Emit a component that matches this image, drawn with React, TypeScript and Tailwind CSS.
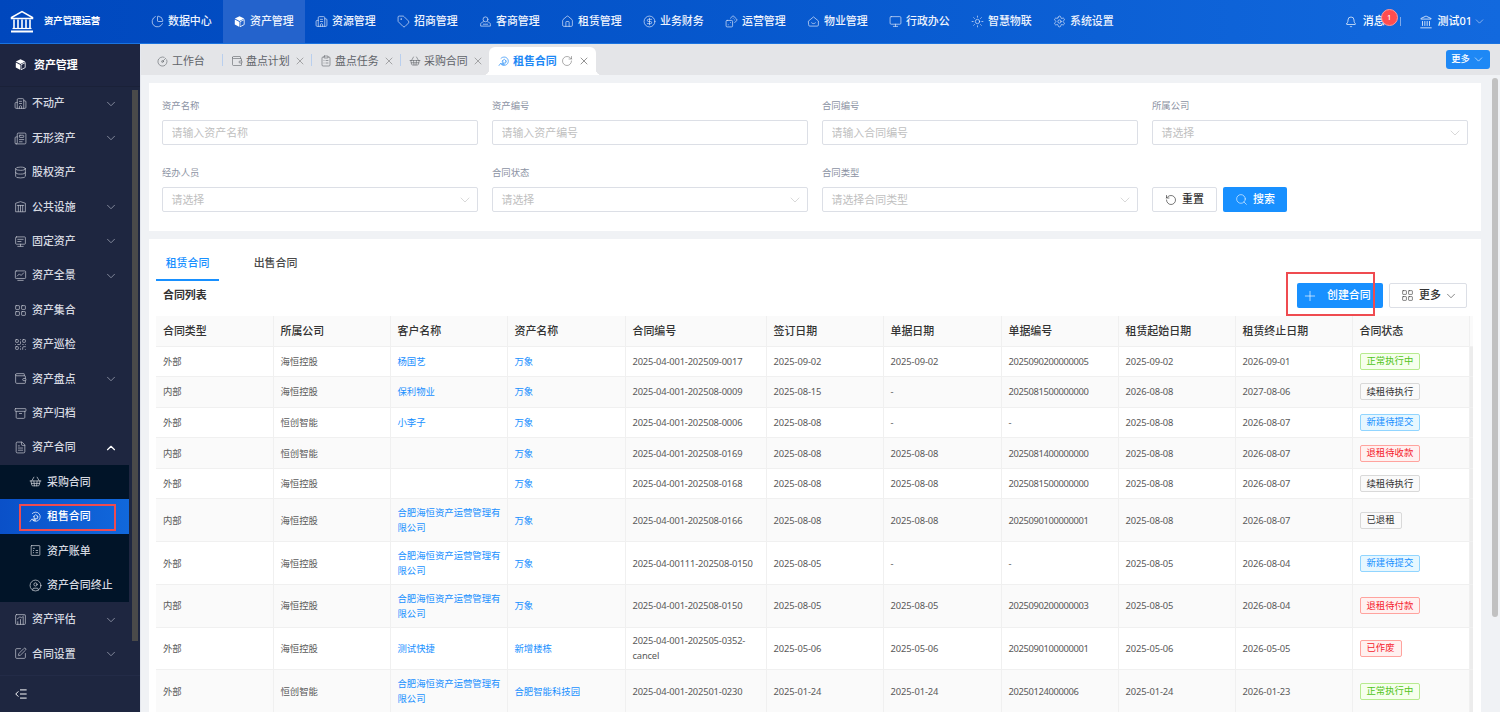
import React from "react";
import {
  Bell, Building2, ChevronDown, ChevronUp, ChartPie, CircleDollarSign, CircleGauge,
  ClipboardList, Database, FileText, House, IndentDecrease, Landmark,
  LayoutGrid, Monitor, Newspaper, Plus, QrCode, RotateCcw, RotateCw, Search, Settings, ShoppingBasket,
  Sun, Tag, Wallet, X, CircleUser, Archive, SquarePen, Dices,
} from "lucide-react";

type IconProps = { size?: number; strokeWidth?: number; className?: string };

const Cube = ({ className = "" }: { className?: string }) => (
  <svg viewBox="0 0 16 16" className={className}>
    <path d="M8 1.5 13.8 4.4 8 7.3 2.2 4.4Z" fill="#fff" />
    <path d="M2.2 5.6 7.4 8.3V14.5L2.2 11.8Z" fill="#fff" />
    <path d="M13.8 5.6 8.6 8.3V14.5L13.8 11.8Z" fill="none" stroke="#fff" strokeWidth="1" />
  </svg>
);

const Logo = () => (
  <svg viewBox="0 0 24 23" className="w-[24px] h-[23px]" fill="none" stroke="#fff">
    <path d="M1.5 7.5 12 1.5 22.5 7.5V8.5H1.5Z" strokeWidth="1.5" />
    <path d="M4 9.5V18M8 9.5V18M12 9.5V18M16 9.5V18M20 9.5V18" strokeWidth="1.6" />
    <path d="M2.5 18.5H21.5" strokeWidth="1.2" />
    <path d="M1 21.5H23" strokeWidth="2" />
  </svg>
);

const Svg = ({ size = 13, strokeWidth = 1.4, className = "", children }: IconProps & { children: React.ReactNode }) => (
  <svg viewBox="0 0 24 24" width={size} height={size} fill="none" stroke="currentColor" strokeWidth={strokeWidth} strokeLinecap="round" strokeLinejoin="round" className={className}>
    {children}
  </svg>
);

const UserBase = (p: IconProps) => (
  <Svg {...p}>
    <circle cx="12" cy="8" r="4.5" />
    <path d="M8 12.5C5 13.5 3 15 3 17v3.5h18V17c0-2-2-3.5-5-4.5" />
    <path d="M8 17h8" />
  </Svg>
);
const HouseSmile = (p: IconProps) => (
  <Svg {...p}>
    <path d="M3 11 12 3.5 21 11v7.5a2 2 0 0 1-2 2H5a2 2 0 0 1-2-2Z" />
    <path d="M8.5 14.5c1.8 2 5.2 2 7 0" />
  </Svg>
);
const ColumnsBox = (p: IconProps) => (
  <Svg {...p}>
    <path d="M3 21V6l9-3 9 3v15Z" />
    <path d="M8 10v11M12 10v11M16 10v11M6 10h12" />
  </Svg>
);
const MonitorChart = (p: IconProps) => (
  <Svg {...p}>
    <rect x="2.5" y="3.5" width="19" height="14" rx="1.5" />
    <path d="m6 13 4-4 3 3 5-5M7 21h10" />
  </Svg>
);
const BoardLines = (p: IconProps) => (
  <Svg {...p}>
    <rect x="3" y="3.5" width="18" height="13.5" rx="1.5" />
    <path d="M7 8h10M7 12h6M12 17v3.5M7 21h10" />
  </Svg>
);
const ChartBox = (p: IconProps) => (
  <Svg {...p}>
    <rect x="3" y="3" width="18" height="18" rx="1.5" />
    <path d="M7 21v-5M12 21v-9M17 21V8M6 11l5-4 3 2 4-4" />
  </Svg>
);
const DotsBox = (p: IconProps) => (
  <Svg {...p}>
    <rect x="4" y="3" width="16" height="18" rx="1" />
    <path d="M8 8h2M8 12h.5M8 16h.5M13 12h3M13 16h3" />
  </Svg>
);
const HouseRing = (p: IconProps) => (
  <Svg {...p}>
    <path d="M6 6.5A8.5 8.5 0 1 1 5 17" />
    <path d="M8 12.5 12.5 8.5 17 12.5M9.5 11.5V16h6v-4.5" />
    <path d="M2 21c1.5-3 3-4 5-4l5 .5c1 .5 1 1.5 0 2H8" />
  </Svg>
);

const navItems: [string, any][] = [
  ["数据中心", ChartPie], ["资产管理", null], ["资源管理", Building2], ["招商管理", Tag], ["客商管理", UserBase], ["租赁管理", House],
  ["业务财务", CircleDollarSign], ["运营管理", Dices], ["物业管理", HouseSmile], ["行政办公", Monitor], ["智慧物联", Sun], ["系统设置", Settings],
];

const sideItems: [string, any, boolean][] = [
  ["不动产", Building2, true], ["无形资产", Newspaper, true], ["股权资产", Database, false], ["公共设施", ColumnsBox, true], ["固定资产", BoardLines, true],
  ["资产全景", MonitorChart, true], ["资产集合", LayoutGrid, false], ["资产巡检", QrCode, false], ["资产盘点", Wallet, true], ["资产归档", Archive, false],
];

const subItems: [string, any][] = [["采购合同", ShoppingBasket], ["租售合同", HouseRing], ["资产账单", DotsBox], ["资产合同终止", CircleUser]];

const tabs: [string, any, boolean][] = [["盘点计划", Wallet, true], ["盘点任务", ClipboardList, true], ["采购合同", ShoppingBasket, false]];

type Tone = "green" | "gray" | "blue" | "red";
const toneClass: Record<Tone, string> = {
  green: "bg-[#f6ffed] border-[#b7eb8f] text-[#52c41a]",
  gray: "bg-[#fafafa] border-[#d9d9d9] text-[#333333]",
  blue: "bg-[#e6f7ff] border-[#91d5ff] text-[#1890ff]",
  red: "bg-[#fff1f0] border-[#ffa39e] text-[#f5222d]",
};

const HF = "合肥海恒资产运营管理有限公司";
const rows: { c: string[]; tag: [string, Tone]; tall?: boolean }[] = [
  { c: ["外部", "海恒控股", "杨国艺", "万象", "2025-04-001-202509-0017", "2025-09-02", "2025-09-02", "2025090200000005", "2025-09-02", "2026-09-01"], tag: ["正常执行中", "green"] },
  { c: ["内部", "海恒控股", "保利物业", "万象", "2025-04-001-202508-0009", "2025-08-15", "-", "2025081500000000", "2026-08-08", "2027-08-06"], tag: ["续租待执行", "gray"] },
  { c: ["外部", "恒创智能", "小李子", "万象", "2025-04-001-202508-0006", "2025-08-08", "-", "-", "2025-08-08", "2026-08-07"], tag: ["新建待提交", "blue"] },
  { c: ["内部", "恒创智能", "", "万象", "2025-04-001-202508-0169", "2025-08-08", "2025-08-08", "2025081400000000", "2025-08-08", "2026-08-07"], tag: ["退租待收款", "red"] },
  { c: ["外部", "海恒控股", "", "万象", "2025-04-001-202508-0168", "2025-08-08", "2025-08-08", "2025081500000000", "2025-08-08", "2026-08-07"], tag: ["续租待执行", "gray"] },
  { c: ["内部", "海恒控股", HF, "万象", "2025-04-001-202508-0166", "2025-08-08", "2025-08-08", "2025090100000001", "2025-08-08", "2026-08-07"], tag: ["已退租", "gray"], tall: true },
  { c: ["外部", "海恒控股", HF, "万象", "2025-04-00111-202508-0150", "2025-08-05", "-", "-", "2025-08-05", "2026-08-04"], tag: ["新建待提交", "blue"], tall: true },
  { c: ["内部", "海恒控股", HF, "万象", "2025-04-001-202508-0150", "2025-08-05", "2025-08-05", "2025090200000003", "2025-08-05", "2026-08-04"], tag: ["退租待付款", "red"], tall: true },
  { c: ["外部", "海恒控股", "测试快捷", "新增楼栋", "2025-04-001-202505-0352-cancel", "2025-05-06", "2025-05-06", "2025090100000001", "2025-05-06", "2026-05-05"], tag: ["已作废", "red"], tall: true },
  { c: ["外部", "恒创智能", HF, "合肥智能科技园", "2025-04-001-202501-0230", "2025-01-24", "2025-01-24", "20250124000006", "2025-01-24", "2026-01-23"], tag: ["正常执行中", "green"], tall: true },
];

const heads = ["合同类型", "所属公司", "客户名称", "资产名称", "合同编号", "签订日期", "单据日期", "单据编号", "租赁起始日期", "租赁终止日期", "合同状态"];

const numTrack = (v: string) => {
  if (/^\d+$/.test(v)) return "tracking-[-0.36px]";
  if (/^\d{4}-\d{2}-\d{2}$/.test(v)) return "tracking-[-0.1px]";
  if (/^\d{4}-/.test(v)) return "tracking-[-0.17px]";
  return "";
};

const Field = ({ label, children }: { label: string; children: React.ReactNode }) => (
  <div className="flex flex-col">
    <div className="h-[13px] leading-[14px] mb-[8px] text-[9.375px] text-[#8c93a3]">{label}</div>
    {children}
  </div>
);

const TextInput = ({ placeholder }: { placeholder: string }) => (
  <input
    readOnly
    placeholder={placeholder}
    className="h-[25px] w-full border border-[#dcdfe6] rounded-[2px] px-[8.5px] text-[10.94px] outline-none placeholder:text-[#bfbfbf] bg-white"
  />
);

const SelectBox = ({ placeholder }: { placeholder: string }) => (
  <div className="h-[25px] w-full border border-[#dcdfe6] rounded-[2px] pl-[8.5px] pr-[4px] text-[10.94px] text-[#bfbfbf] bg-white flex items-center justify-between">
    <span className="pt-px">{placeholder}</span>
    <ChevronDown size={16} strokeWidth={0.9} className="text-[#bfbfbf]" />
  </div>
);

const SideRow = ({ label, Icon, chev }: { label: string; Icon: any; chev?: "down" | "up" }) => (
  <div className="h-[34.4px] shrink-0 flex items-center pl-[14px] pr-[11px] gap-[5px] text-[10.94px] font-medium">
    <Icon size={13} strokeWidth={1.3} className="shrink-0 text-[#c4c8d2]" />
    <span>{label}</span>
    {chev === "down" && <ChevronDown size={14} strokeWidth={1.5} className="ml-auto text-[#8f95a6]" />}
    {chev === "up" && <ChevronUp size={14} strokeWidth={2} className="ml-auto text-white" />}
  </div>
);

export default function App() {
  return (
    <div className="w-[1500px] h-[712px] overflow-hidden flex flex-col bg-[#f0f2f5] [font-family:'Noto_Sans','Noto_Sans_CJK_SC',sans-serif]">
      {/* top bar */}
      <header className="h-[44px] shrink-0 flex items-stretch text-white bg-gradient-to-r from-[#0047bd] to-[#1269de] border-b border-[#1a73e0]">
        <div className="w-[141px] shrink-0 flex items-center pl-[10px] gap-[10px]">
          <Logo />
          <span className="text-[9.375px] font-bold">资产管理运营</span>
        </div>
        <nav className="flex">
          {navItems.map(([label, Icon]) => (
            <div key={label} className={`w-[82px] pl-[10px] flex items-center gap-[4px] text-[10.94px] font-medium ${label === "资产管理" ? "bg-[#2463cc]" : ""}`}>
              {Icon ? <Icon size={13} strokeWidth={1.3} className="text-[#dce6fa]" /> : <Cube className="w-[13px] h-[13px]" />}
              <span className="text-[#eef3fd]">{label}</span>
            </div>
          ))}
        </nav>
        <div className="ml-auto flex items-center">
          <Bell size={12} strokeWidth={1.4} />
          <div className="relative ml-[6px] text-[10.94px] font-medium">
            消息
            <span className="absolute left-[18px] top-[-4px] w-[17px] h-[17px] rounded-full bg-[#ff4d4f] border border-[#ff9a9b] text-[7.5px] flex items-center justify-center">1</span>
          </div>
          <div className="w-px h-[9px] bg-[#7fa9ea] ml-[15px]" />
          <Landmark size={14} strokeWidth={1.3} className="ml-[18px]" />
          <span className="ml-[5px] text-[10.94px] font-medium">测试01</span>
          <ChevronDown size={13} strokeWidth={1.1} className="ml-[1px] mr-[14px] text-[#d5e2f8]" />
        </div>
      </header>

      <div className="flex flex-1 min-h-0">
        {/* sidebar */}
        <aside className="w-[141px] shrink-0 flex flex-col bg-[#1e2640] border-r border-[#e4e7ee] text-[#d6d9e0]">
          <div className="h-[42.5px] shrink-0 flex items-center pl-[14px] gap-[7px] text-white text-[10.94px] font-bold bg-[#1e2540] border-b border-[#1a2138]">
            <Cube className="w-[13px] h-[13px]" />
            资产管理
          </div>
          <div className="flex flex-1 min-h-0">
            <div className="w-[129px] shrink-0 flex flex-col">
              {sideItems.map(([label, Icon, chev]) => (
                <SideRow key={label} label={label} Icon={Icon} chev={chev ? "down" : undefined} />
              ))}
              <SideRow label="资产合同" Icon={FileText} chev="up" />
              <div className="bg-[#011428] flex flex-col shrink-0">
                {subItems.map(([label, Icon]) => {
                  const active = label === "租售合同";
                  return (
                    <div key={label} className={`relative h-[34.4px] flex items-center pl-[29px] gap-[5px] text-[10.94px] font-medium ${active ? "bg-gradient-to-r from-[#0a50c8] to-[#1168dc] text-white" : ""}`}>
                      <Icon size={13} strokeWidth={1.3} className="shrink-0" />
                      <span>{label}</span>
                      {active && <div className="absolute left-[19px] top-[5px] w-[97px] h-[27px] border-[2px] border-[#ef4b50]" />}
                    </div>
                  );
                })}
              </div>
              <SideRow label="资产评估" Icon={ChartBox} chev="down" />
              <SideRow label="合同设置" Icon={SquarePen} chev="down" />
            </div>
            <div className="w-[11px] pl-[3px] pt-[3px]">
              <div className="w-[6px] h-[551px] bg-[#4a4a4a]" />
            </div>
          </div>
          <div className="h-[37px] shrink-0 flex items-center pl-[14px] border-t border-[#232b47]">
            <IndentDecrease size={14} strokeWidth={1.7} className="text-white" />
          </div>
        </aside>

        {/* main */}
        <main className="flex-1 min-w-0 flex flex-col">
          <div className="h-[31px] shrink-0 bg-[#e4e5e8] flex items-end text-[10.94px] text-[#5f6368]">
            <div className="h-[28px] w-[81px] flex items-center pl-[16px] gap-[4px]">
              <CircleGauge size={11} strokeWidth={1.3} />
              <span>工作台</span>
            </div>
            <div className="w-px h-[12px] bg-[#b9cfee] mb-[9px]" />
            {tabs.map(([label, Icon, sep]) => (
              <React.Fragment key={label}>
                <div className="h-[28px] w-[88px] flex items-center pl-[8px]">
                  <Icon size={12} strokeWidth={1.2} />
                  <span className="ml-[3px]">{label}</span>
                  <X size={12} strokeWidth={1.2} className="ml-[4px] text-[#777]" />
                </div>
                {sep && <div className="w-px h-[12px] bg-[#b9cfee] mb-[9px]" />}
              </React.Fragment>
            ))}
            <div className="relative h-[28px] w-[107px] rounded-t-[6px] bg-white flex items-center pl-[9px] text-[#1e88f5] font-bold">
              <span className="absolute left-[-6px] bottom-0 w-[6px] h-[6px] bg-[radial-gradient(circle_at_0_0,#e4e5e8_6px,#ffffff_6.5px)]" />
              <span className="absolute right-[-6px] bottom-0 w-[6px] h-[6px] bg-[radial-gradient(circle_at_100%_0,#e4e5e8_6px,#ffffff_6.5px)]" />
              <HouseRing size={12} strokeWidth={1.3} />
              <span className="ml-[3px]">租售合同</span>
              <RotateCw size={12} strokeWidth={1.1} className="ml-[4px] text-[#6b6b6b]" />
              <X size={12} strokeWidth={1.3} className="ml-[5px] text-[#5b5b5b]" />
            </div>
            <button className="ml-auto mr-[10px] mb-[6px] w-[44px] h-[19px] rounded-[3px] bg-[#1e88f5] text-white text-[9.375px] font-medium flex items-center justify-center gap-[2px]">
              更多
              <ChevronDown size={13} strokeWidth={1.1} />
            </button>
          </div>

          <div className="flex flex-1 min-h-0">
            <div className="flex-1 min-w-0 pl-[8px] pr-[11px] pt-[8px] flex flex-col gap-[8px]">
              {/* search */}
              <section className="bg-white h-[148px] shrink-0 pl-[13px] pr-[13px] pt-[16px]">
                <div className="grid grid-cols-4 gap-x-[14px] gap-y-[21px]">
                  <Field label="资产名称"><TextInput placeholder="请输入资产名称" /></Field>
                  <Field label="资产编号"><TextInput placeholder="请输入资产编号" /></Field>
                  <Field label="合同编号"><TextInput placeholder="请输入合同编号" /></Field>
                  <Field label="所属公司"><SelectBox placeholder="请选择" /></Field>
                  <Field label="经办人员"><SelectBox placeholder="请选择" /></Field>
                  <Field label="合同状态"><SelectBox placeholder="请选择" /></Field>
                  <Field label="合同类型"><SelectBox placeholder="请选择合同类型" /></Field>
                  <div className="flex items-end gap-[6px]">
                    <button className="w-[65px] h-[25px] border border-[#dcdfe6] rounded-[2px] bg-white text-[#333] text-[10.94px] font-medium flex items-center justify-center gap-[5px]">
                      <RotateCcw size={12} strokeWidth={1.3} />
                      重置
                    </button>
                    <button className="w-[64px] h-[25px] rounded-[2px] bg-[#1890ff] text-white text-[10.94px] font-medium flex items-center justify-center gap-[5px]">
                      <Search size={13} strokeWidth={1.1} />
                      搜索
                    </button>
                  </div>
                </div>
              </section>

              {/* list */}
              <section className="bg-white flex-1 min-h-0 overflow-hidden pl-[7px] pr-[8px]">
                <div className="flex items-end h-[42px] gap-[25px] text-[10.94px]">
                  <div className="w-[63px] h-[37px] pt-[3px] flex items-center justify-center text-[#1890ff] font-medium border-b-[2px] border-[#1890ff]">租赁合同</div>
                  <div className="w-[63px] h-[37px] pt-[1px] flex items-center justify-center text-[#4a4a4a] font-medium">出售合同</div>
                </div>
                <div className="flex items-center h-[25px] mt-[2px] mb-[8px] pl-[7px] pr-[6px]">
                  <span className="text-[10.94px] font-bold text-[#333]">合同列表</span>
                  <div className="relative ml-auto flex gap-[6px]">
                    <button className="w-[86px] h-[25px] pl-[5px] rounded-[2px] bg-[#1890ff] text-white text-[10.94px] font-medium flex items-center gap-[9px]">
                      <Plus size={16} strokeWidth={1} />
                      创建合同
                    </button>
                    <button className="w-[78px] h-[25px] pl-[11px] rounded-[2px] border border-[#dcdfe6] bg-white text-[#333] text-[10.94px] font-medium flex items-center gap-[5px]">
                      <LayoutGrid size={13} strokeWidth={1.1} />
                      更多
                      <ChevronDown size={14} strokeWidth={1} className="-ml-[2px]" />
                    </button>
                    <div className="absolute left-[-11px] top-[-11px] w-[89px] h-[44px] border-[2px] border-[#ef4b50]" />
                  </div>
                </div>
                <table className="table-fixed border-collapse w-[1317px] text-[9.375px] text-[#595959]">
                  <colgroup>
                    <col className="w-[117px]" /><col className="w-[117px]" /><col className="w-[117px]" /><col className="w-[118px]" /><col className="w-[141px]" />
                    <col className="w-[117px]" /><col className="w-[118px]" /><col className="w-[117px]" /><col className="w-[117px]" /><col className="w-[117px]" /><col className="w-[117px]" /><col className="w-[4px]" />
                  </colgroup>
                  <thead>
                    <tr className="h-[30px] bg-[#fafafa]">
                      {heads.map((h) => (
                        <th key={h} className="px-[7px] text-left text-[10.94px] font-medium text-[#333] border-r border-b border-[#f0f0f0]">{h}</th>
                      ))}
                      <th className="bg-[#fafafa] border-b border-[#f0f0f0]" />
                    </tr>
                  </thead>
                  <tbody>
                    {rows.map((r, i) => (
                      <tr key={i} className={`${r.tall ? "h-[42.7px]" : "h-[30.6px]"} ${i % 2 === 1 || i === 9 ? "bg-[#fafafa]" : "bg-white"}`}>
                        {r.c.map((v, j) => (
                          <td key={j} className={`px-[7px] pr-[6px] leading-[15px] border-r border-b border-[#f0f0f0] break-words ${numTrack(v)} ${j === 2 || j === 3 ? "text-[#1890ff]" : ""}`}>{v}</td>
                        ))}
                        <td className="px-[7px] border-r border-b border-[#f0f0f0]">
                          <span className={`inline-flex items-center h-[17px] px-[6px] rounded-[2px] border whitespace-nowrap ${toneClass[r.tag[1]]}`}>{r.tag[0]}</span>
                        </td>
                        <td className="bg-[#ececec] border-b border-[#f0f0f0]" />
                      </tr>
                    ))}
                  </tbody>
                </table>
              </section>
            </div>
            <div className="w-[8px] shrink-0 pt-[3px]">
              <div className="w-[6px] h-[539px] bg-[#c1c1c1] rounded-[3px]" />
            </div>
          </div>
        </main>
      </div>
    </div>
  );
}
